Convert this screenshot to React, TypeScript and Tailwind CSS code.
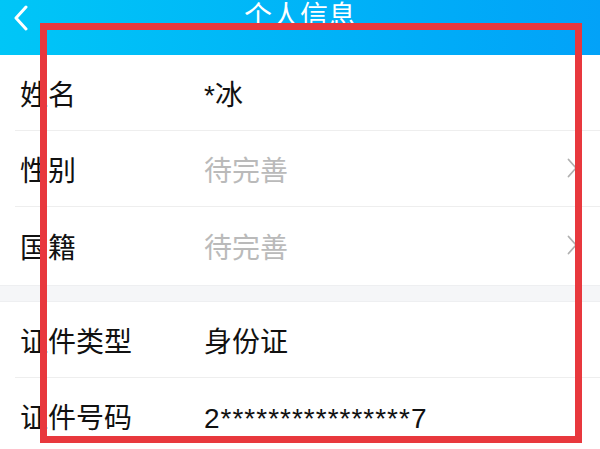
import { ReactNode } from 'react'

const font = { fontFamily: '"Liberation Sans", "Noto Sans CJK SC", sans-serif' }

function Chevron() {
  return (
    <svg width="11" height="20" viewBox="0 0 11 20" fill="none" className="shrink-0 -mt-[2px]">
      <path d="M1.5 1.5 L9 10 L1.5 18.5" stroke="#b0b0b0" strokeWidth="1.8" strokeLinecap="round" strokeLinejoin="round" />
    </svg>
  )
}

interface RowProps {
  label: string
  value: ReactNode
  muted?: boolean
  arrow?: boolean
  divider?: boolean
  height?: string
}

function Row({ label, value, muted, arrow, divider = true, height = 'h-[76px]' }: RowProps) {
  return (
    <div className={`flex items-center pl-5 pr-[22px] ${height} ${divider ? 'border-b border-[#eeeeee] ml-[15px] pl-[5px]' : ''}`}>
      <div className="w-[184px] shrink-0 pt-[6px] text-[28px] text-[#111111] leading-none">{label}</div>
      <div className={`flex-1 pt-[6px] text-[28px] leading-none ${muted ? 'text-[#bababa]' : 'text-[#111111]'}`}>{value}</div>
      {arrow && <Chevron />}
    </div>
  )
}

export default function App() {
  return (
    <div className="relative w-[600px] h-[449px] overflow-hidden bg-white" style={font}>
      <div className="relative h-[55px] bg-gradient-to-r from-[#00c6f7] to-[#03a2f8]">
        <svg width="16" height="26" viewBox="0 0 16 26" fill="none" className="absolute left-[13px] top-[5px]">
          <path d="M13 2 L3 13 L13 24" stroke="white" strokeWidth="3" strokeLinecap="round" strokeLinejoin="round" />
        </svg>
        <div className="absolute inset-x-0 top-[3px] text-center text-[28px] leading-none text-white">个人信息</div>
      </div>

      <div className="bg-white">
        <Row label="姓名" value="*冰" />
        <Row label="性别" value="待完善" muted arrow />
        <Row label="国籍" value="待完善" muted arrow divider={false} height="h-[78px]" />
      </div>
      <div className="h-[17px] bg-[#f5f6f8] border-y border-[#eeeff1]" />
      <div className="bg-white">
        <Row label="证件类型" value="身份证" />
        <Row label="证件号码" value={<span className="tracking-[1px]">2****************7</span>} divider={false} />
      </div>

      <div className="absolute left-[40px] top-[23px] w-[542px] h-[420px] border-[7px] border-[#e8383d] pointer-events-none" />
    </div>
  )
}
